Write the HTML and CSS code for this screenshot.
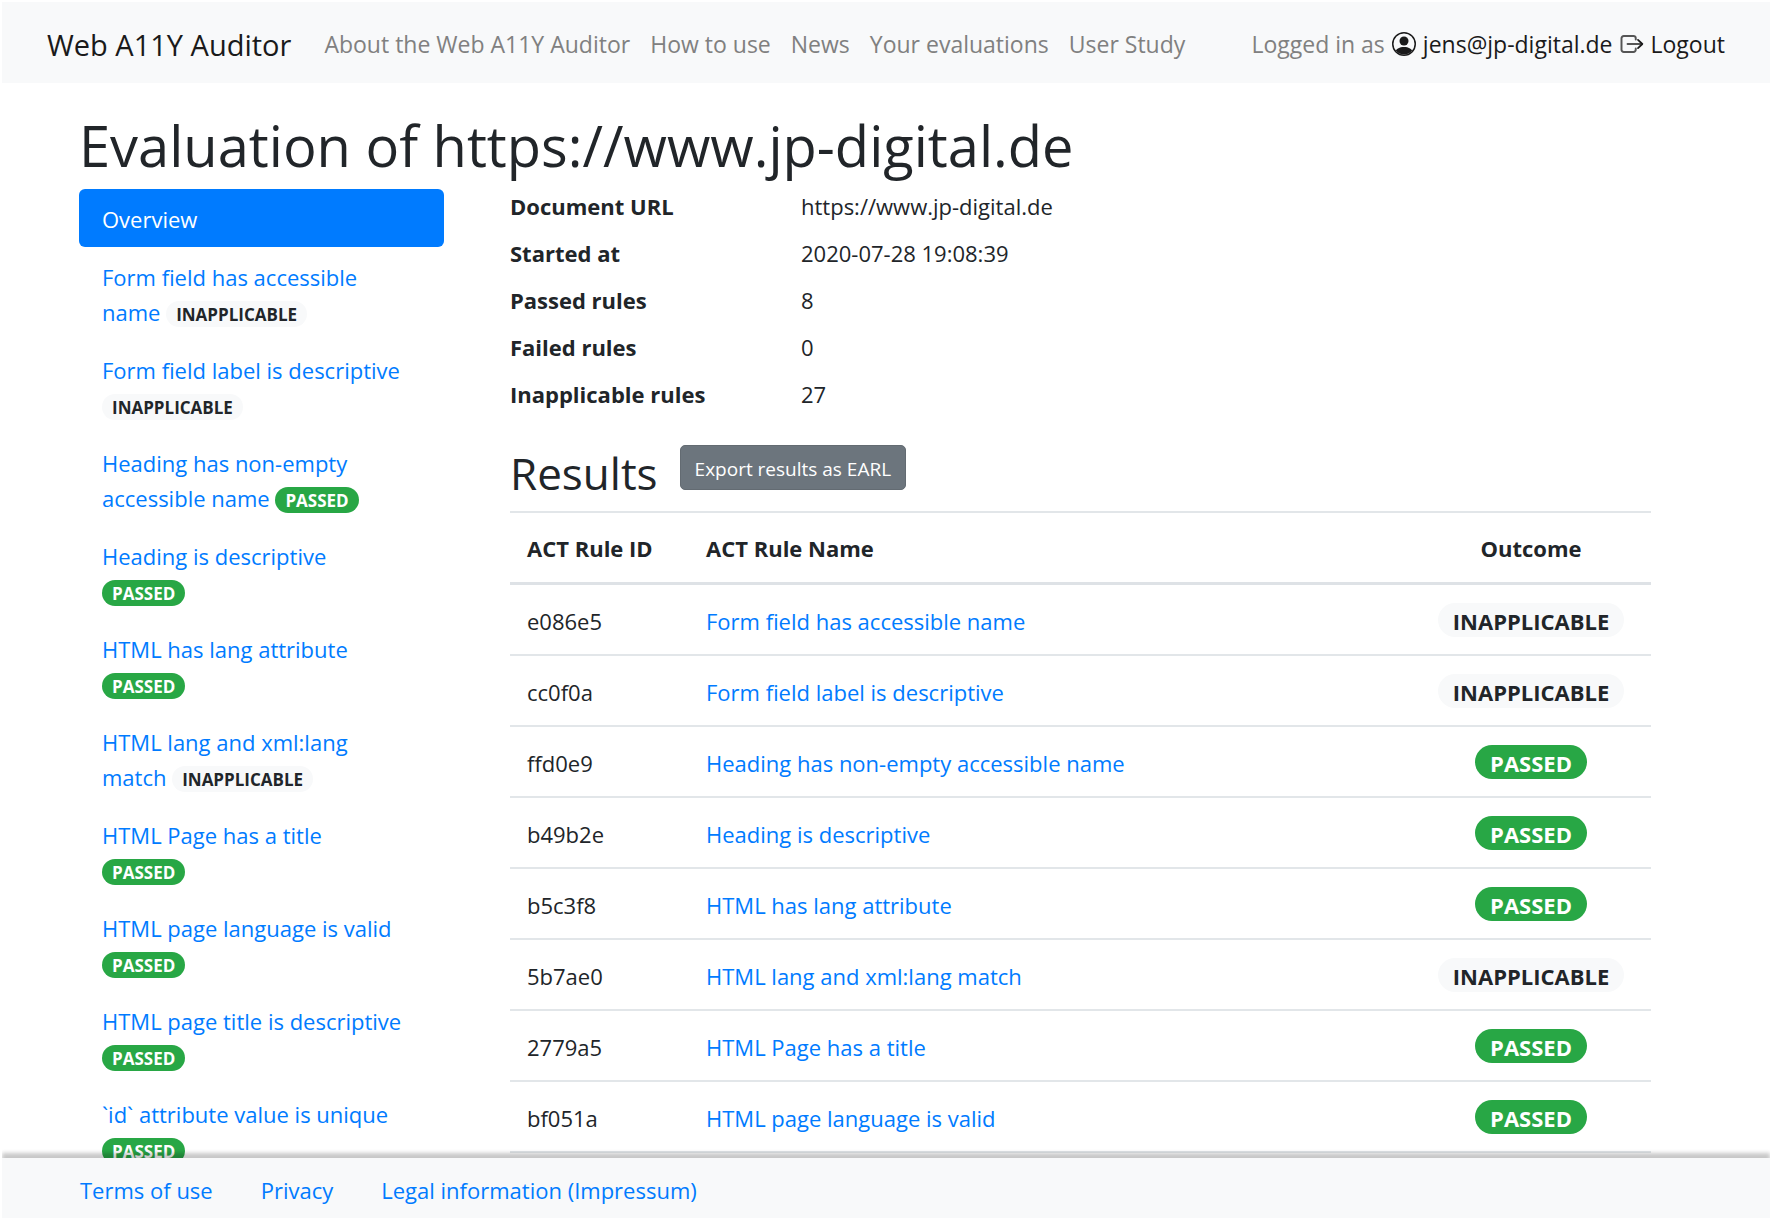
FILE: index.html
```html
<!DOCTYPE html>
<html lang="en">
<head>
<meta charset="utf-8">
<title>Evaluation of https://www.jp-digital.de</title>
<link rel="stylesheet" href="styles.css">
</head>
<body>
<div class="page">
  <header class="navbar">
    <a class="brand" href="#">Web A11Y Auditor</a>
    <nav class="nav-links">
      <a href="#">About the Web A11Y Auditor</a>
      <a href="#">How to use</a>
      <a href="#">News</a>
      <a href="#">Your evaluations</a>
      <a href="#">User Study</a>
    </nav>
    <div class="account">
      <span>Logged in as</span>
      <a href="#"><svg class="icon" viewBox="0 0 16 16" fill="currentColor" aria-hidden="true"><path d="M13.468 12.37C12.758 11.226 11.195 10 8 10s-4.757 1.225-5.468 2.37A6.987 6.987 0 0 0 8 15a6.987 6.987 0 0 0 5.468-2.63z"/><path fill-rule="evenodd" d="M8 9a3 3 0 1 0 0-6 3 3 0 0 0 0 6z"/><path fill-rule="evenodd" d="M8 1a7 7 0 1 0 0 14A7 7 0 0 0 8 1zM0 8a8 8 0 1 1 16 0A8 8 0 0 1 0 8z"/></svg>jens@jp-digital.de</a>
      <a href="#"><svg class="icon" viewBox="0 0 16 16" fill="none" stroke="currentColor" stroke-linecap="round" stroke-linejoin="round" aria-hidden="true"><path stroke="#555" stroke-width="1.3" d="M10.500 5V4A1.500 1.500 0 0 0 9 2.700H2.500A1.500 1.500 0 0 0 1 4.200v7.600a1.500 1.500 0 0 0 1.500 1.500H9a1.500 1.500 0 0 0 1.500-1.500V11"/><path stroke="#555" stroke-width="1.200" d="M5 8h9"/><path stroke-width="1.200" d="M12 5.300 14.900 8 12 10.700"/></svg>Logout</a>
    </div>
  </header>

  <main class="content">
    <h1>Evaluation of https://www.jp-digital.de</h1>
    <div class="columns">
      <nav class="rules" aria-label="Rules">
        <a class="active" href="#">Overview</a>
        <a href="#">Form field has accessible name <span class="badge light">INAPPLICABLE</span></a>
        <a href="#">Form field label is descriptive <span class="badge light">INAPPLICABLE</span></a>
        <a href="#">Heading has non-empty accessible name <span class="badge success">PASSED</span></a>
        <a href="#">Heading is descriptive <br><span class="badge success">PASSED</span></a>
        <a href="#">HTML has lang attribute <br><span class="badge success">PASSED</span></a>
        <a href="#">HTML lang and xml:lang <span class="keep">match <span class="badge light">INAPPLICABLE</span></span></a>
        <a href="#">HTML Page has a title <br><span class="badge success">PASSED</span></a>
        <a href="#">HTML page language is valid <span class="badge success">PASSED</span></a>
        <a href="#">HTML page title is descriptive <span class="badge success">PASSED</span></a>
        <a href="#">`id` attribute value is unique <span class="badge success">PASSED</span></a>
      </nav>

      <section class="details">
        <dl class="summary">
          <dt>Document URL</dt><dd>https://www.jp-digital.de</dd>
          <dt>Started at</dt><dd>2020-07-28 19:08:39</dd>
          <dt>Passed rules</dt><dd>8</dd>
          <dt>Failed rules</dt><dd>0</dd>
          <dt>Inapplicable rules</dt><dd>27</dd>
        </dl>
        <div class="results-head">
          <h2>Results</h2>
          <button class="export" type="button">Export results as EARL</button>
        </div>
        <table class="results">
          <thead>
            <tr><th class="id">ACT Rule ID</th><th>ACT Rule Name</th><th class="outcome">Outcome</th></tr>
          </thead>
          <tbody>
            <tr><td>e086e5</td><td><a href="#">Form field has accessible name</a></td><td class="outcome"><span class="badge light">INAPPLICABLE</span></td></tr>
            <tr><td>cc0f0a</td><td><a href="#">Form field label is descriptive</a></td><td class="outcome"><span class="badge light">INAPPLICABLE</span></td></tr>
            <tr><td>ffd0e9</td><td><a href="#">Heading has non-empty accessible name</a></td><td class="outcome"><span class="badge success">PASSED</span></td></tr>
            <tr><td>b49b2e</td><td><a href="#">Heading is descriptive</a></td><td class="outcome"><span class="badge success">PASSED</span></td></tr>
            <tr><td>b5c3f8</td><td><a href="#">HTML has lang attribute</a></td><td class="outcome"><span class="badge success">PASSED</span></td></tr>
            <tr><td>5b7ae0</td><td><a href="#">HTML lang and xml:lang match</a></td><td class="outcome"><span class="badge light">INAPPLICABLE</span></td></tr>
            <tr><td>2779a5</td><td><a href="#">HTML Page has a title</a></td><td class="outcome"><span class="badge success">PASSED</span></td></tr>
            <tr><td>bf051a</td><td><a href="#">HTML page language is valid</a></td><td class="outcome"><span class="badge success">PASSED</span></td></tr>
          </tbody>
        </table>
      </section>
    </div>
  </main>

  <footer class="footer">
    <a href="#">Terms of use</a>
    <a href="#">Privacy</a>
    <a href="#">Legal information (Impressum)</a>
  </footer>
</div>
</body>
</html>
```
FILE: styles.css
```css
* { box-sizing: border-box; }

body {
  margin: 2px;
  background: #fff;
  color: #212529;
  font: 22px/35px "Open Sans", "Noto Sans", sans-serif;
}

a { color: #007bff; text-decoration: none; }

.page {
  display: flex;
  flex-direction: column;
  height: calc(100vh - 4px);
}

.navbar {
  display: flex;
  align-items: center;
  flex: none;
  padding: 25px 45px 21px;
  background: #f8f9fa;
  white-space: nowrap;
}

.brand { margin-right: 33px; color: #1a1a1a; font-size: 29px; }
.nav-links { display: flex; gap: 20px; font-size: 23px; }
.nav-links a, .account { color: #808080; }
.account { display: flex; gap: 7px; margin-left: auto; font-size: 23px; }
.account a { color: #1a1a1a; }

.icon {
  width: 24px;
  height: 24px;
  margin-right: 7px;
  vertical-align: -3px;
}

.content {
  flex: 1;
  min-height: 0;
  overflow-y: auto;
  scrollbar-width: none;
  padding: 27px 119px 0 77px;
}

h1, h2 { margin: 0; font-weight: 400; }
h1 { margin-bottom: 9px; font-size: 56px; line-height: 70px; }
h2 { font-size: 44px; line-height: 56px; }

.columns {
  display: grid;
  grid-template-columns: 365fr 1141fr;
  gap: 66px;
}

.rules a {
  display: block;
  padding: 13px 23px 10px;
}
.rules .active {
  border-radius: 6px;
  background: #007bff;
  color: #fff;
}
.keep { white-space: nowrap; }

.badge {
  display: inline-block;
  padding: 5px 10px 3px;
  border-radius: 17px;
  font-size: 17px;
  font-weight: 700;
  line-height: 18px;
}
.light { background: #f8f9fa; color: #212529; }
.success { background: #28a745; color: #fff; }

.summary {
  display: grid;
  grid-template-columns: 291fr 850fr;
  row-gap: 12px;
  margin: 0 0 33px;
}
.summary dt { font-weight: 700; }
.summary dd { margin: 0; }

.results-head { display: flex; align-items: flex-start; gap: 22px; margin-bottom: 10px; }

.export {
  padding: 8px 14px 5px;
  border: 1px solid #636b72;
  border-radius: 5px;
  background: #6c757d;
  color: #fff;
  font: 19px/30px "Open Sans", "Noto Sans", sans-serif;
}

.results { width: 100%; border-collapse: collapse; table-layout: fixed; }
.results th, .results td {
  padding: 18px 17px 16px;
  border-top: 2px solid #e2e6e9;
  text-align: left;
}
.results tbody td { padding-bottom: 15px; }
.results thead th { border-bottom: 3px solid #dee2e6; }
.results tbody tr:last-child td { border-bottom: 2px solid #e2e6e9; }
.results .id { width: 179px; }
.results .outcome { width: 240px; text-align: center; }
.results .badge { padding: 7px 15px 5px; font-size: 22px; line-height: 22px; }

.footer {
  display: flex;
  gap: 48px;
  flex: none;
  position: relative;
  padding: 15px 78px 10px;
  background: #f8f9fa;
  box-shadow: 0 -5px 4px rgba(0, 0, 0, 0.22);
}
```
